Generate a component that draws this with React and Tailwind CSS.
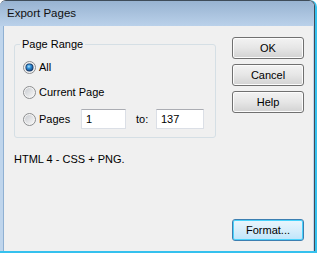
function Radio({ checked, id }) {
  return (
    <svg width="13" height="13" viewBox="0 0 13 13" className="shrink-0">
      <defs>
        <linearGradient id={`o${id}`} x1="0" y1="0" x2="1" y2="1">
          <stop offset="0" stopColor="#c9ccd1" />
          <stop offset="1" stopColor="#f7f7f7" />
        </linearGradient>
        <radialGradient id={`d${id}`} cx="0.4" cy="0.35" r="0.7">
          <stop offset="0" stopColor="#a9e2ff" />
          <stop offset="0.45" stopColor="#2f8fd8" />
          <stop offset="1" stopColor="#16467f" />
        </radialGradient>
      </defs>
      <circle cx="6.5" cy="6.5" r="6" fill="#f4f4f4" stroke="#8a8c8e" strokeWidth="1" />
      <circle cx="6.5" cy="6.5" r="4.5" fill={`url(#o${id})`} />
      {checked && (
        <>
          <circle cx="6.5" cy="6.5" r="4" fill="#1d3f6a" />
          <circle cx="6.5" cy="6.5" r="3.2" fill={`url(#d${id})`} />
        </>
      )}
    </svg>
  );
}

function Btn({ children, def }) {
  return (
    <div
      className={
        def
          ? "w-[72px] h-[22px] flex items-center justify-center rounded-[3px] border border-[#3c7fb1] bg-linear-to-b from-[#e9f6fd] via-[#d7eefb] to-[#bde5fb] shadow-[inset_0_0_0_1px_#48d2fb]"
          : "w-[72px] h-[22px] flex items-center justify-center rounded-[3px] border border-[#707070] bg-linear-to-b from-[#f3f3f3] via-[#e6e6e6] to-[#d2d2d2] shadow-[inset_0_0_0_1px_#fcfcfc]"
      }
    >
      {children}
    </div>
  );
}

export default function App() {
  return (
    <div className="w-[318px] h-[254px] bg-white font-['Liberation_Sans',Arial,sans-serif] text-[11px] text-black leading-none">
      <div className="w-[317px] h-[253px] border-r-2 border-b-2 border-[#35c1ee] rounded-tr-[7px]">
        <div className="w-[315px] h-[251px] flex flex-col rounded-t-[6px] border-t border-r border-[#3f4c59] bg-[#bfd5ec] overflow-hidden">
          <div className="h-[25px] shrink-0 flex items-center pl-[7px] bg-linear-to-b from-[#98b3d1] to-[#bad1ea] text-[11.5px] text-[#111]">
            Export Pages
          </div>
          <div className="flex-1 ml-[3px] mr-[1px] flex bg-[#f0f0f0] border-l border-[#8fb0d2]">
            <div className="pl-[10px] pt-[18px] flex flex-col">
              <div className="relative w-[202px] h-[94px] border border-[#d5dfe5] rounded-[3px] pl-[8px] pt-[14px] flex flex-col gap-[9px]">
                <span className="absolute left-[5px] top-[-7px] px-[2px] bg-[#f0f0f0] leading-[13px]">
                  Page Range
                </span>
                <div className="h-[16px] flex items-center">
                  <Radio checked id="a" />
                  <span className="ml-[3px]">All</span>
                </div>
                <div className="h-[16px] flex items-center">
                  <Radio id="b" />
                  <span className="ml-[3px]">Current Page</span>
                </div>
                <div className="h-[20px] flex items-center">
                  <Radio id="c" />
                  <span className="ml-[3px] w-[42px]">Pages</span>
                  <div className="w-[45px] h-[20px] flex items-center pl-[4px] bg-white border border-[#dbdfe6] border-t-[#abadb3]">
                    1
                  </div>
                  <span className="ml-[10px] w-[20px]">to:</span>
                  <div className="w-[48px] h-[20px] flex items-center pl-[4px] bg-white border border-[#dbdfe6] border-t-[#abadb3]">
                    137
                  </div>
                </div>
              </div>
              <div className="mt-[15px] leading-[13px]">HTML 4 - CSS + PNG.</div>
            </div>
            <div className="ml-auto mr-[9px] pt-[11px] pb-[10px] flex flex-col gap-[5px]">
              <Btn>OK</Btn>
              <Btn>Cancel</Btn>
              <Btn>Help</Btn>
              <div className="mt-auto">
                <Btn def>Format...</Btn>
              </div>
            </div>
          </div>
        </div>
      </div>
    </div>
  );
}
